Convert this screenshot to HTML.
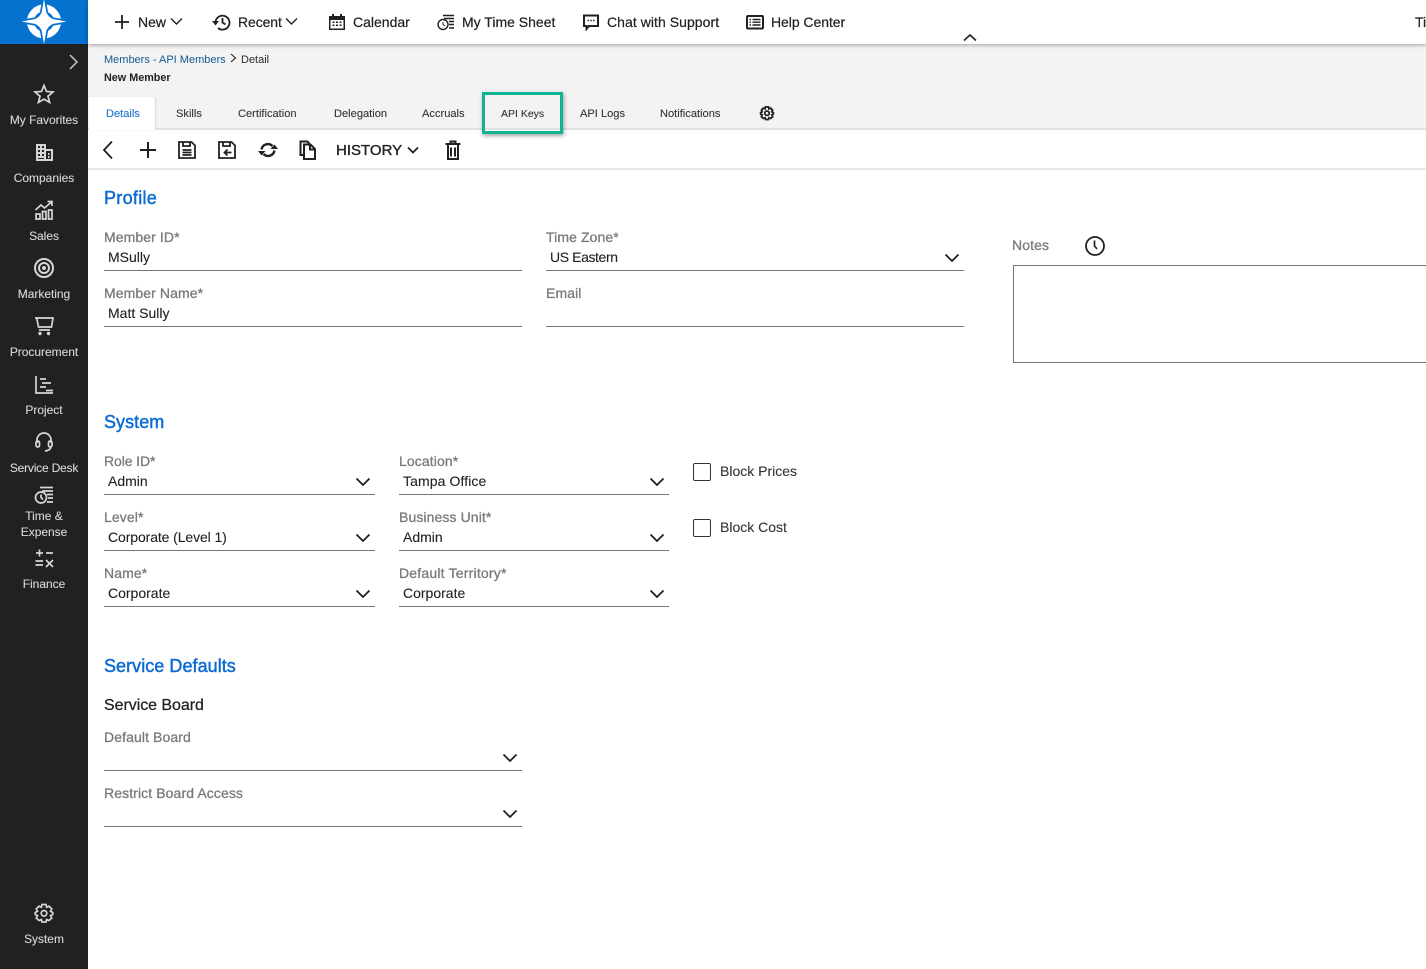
<!DOCTYPE html>
<html lang="en">
<head>
<meta charset="utf-8">
<title>New Member</title>
<style>
html,body{margin:0;padding:0;width:1426px;height:969px;overflow:hidden;background:#fff}
body{position:relative;font-family:"Liberation Sans",sans-serif;color:#212121}
.a,.t,.s,.l,.v,.h,.u,svg{position:absolute}
.t{white-space:nowrap;line-height:16px;font-size:14px;-webkit-text-stroke:.2px}
.s{left:0;width:88px;text-align:center;color:#d8d8d8;font-size:12px;line-height:16px;letter-spacing:-.03px;-webkit-text-stroke:.1px}
.l{white-space:nowrap;line-height:16px;font-size:14px;color:#7a7a7a;letter-spacing:.1px;-webkit-text-stroke:.3px}
.v{white-space:nowrap;line-height:16px;font-size:14px;color:#212121;-webkit-text-stroke:.1px}
.h{white-space:nowrap;line-height:22px;font-size:18px;color:#0b6bd3;letter-spacing:.05px;-webkit-text-stroke:.45px}
.u{height:1px;background:#757575}
.tab{white-space:nowrap;line-height:14px;font-size:11.100px;color:#333;position:absolute;top:107px;-webkit-text-stroke:.1px}
.ic{fill:none;stroke:#d6d6d6;stroke-width:1.7}
.k{fill:none;stroke:#212121;stroke-width:1.8}
</style>
</head>
<body>
<!-- sidebar -->
<div class="a" style="left:0;top:0;width:88px;height:969px;background:#212121"></div>
<div class="a" style="left:0;top:0;width:88px;height:44px;background:#0672cf"></div>
<svg style="left:22px;top:0" width="44" height="44" viewBox="0 0 44 44">
<circle cx="22" cy="21.500" r="13.500" fill="none" stroke="#fff" stroke-width="7"/>
<path d="M22 0L24.500 13L27 16.500L30.500 19L44 21.500L30.500 24L27 26.500L24.500 30L22 44L19.500 30L17 26.500L13.500 24L0 21.500L13.500 19L17 16.500L19.500 13Z" fill="#fff" stroke="#0672cf" stroke-width="3.500" stroke-linejoin="round"/>
<path d="M22 -1L24.500 13L27 16.500L30.500 19L45 21.500L30.500 24L27 26.500L24.500 30L22 44L19.500 30L17 26.500L13.500 24L-1 21.500L13.500 19L17 16.500L19.500 13Z" fill="#fff"/>
</svg>
<svg style="left:68px;top:54px" width="12" height="16"><path d="M2 1L9 8L2 15" fill="none" stroke="#c8c8c8" stroke-width="1.500"/></svg>

<svg style="left:33px;top:83px" width="22" height="22" viewBox="0 0 22 22"><path class="ic" d="M11 2.500L13.500 8.500L20 9L15 13.200L16.600 19.500L11 16.100L5.400 19.500L7 13.200L2 9L8.500 8.500Z"/></svg>
<div class="s" style="top:112px">My Favorites</div>
<svg style="left:33px;top:141px" width="22" height="22" viewBox="0 0 22 22"><path fill="#d6d6d6" fill-rule="evenodd" d="M3 3H13V8H20V20H3ZM5 5V7H7V5ZM9 5V7H11V5ZM5 9V11H7V9ZM9 9V11H11V9ZM5 13V15H7V13ZM9 13V15H11V13ZM5 17V18H11V17ZM13 10V18H18V10ZM15 12H16.500V14H15ZM15 15H16.500V17H15Z"/></svg>
<div class="s" style="top:170px">Companies</div>
<svg style="left:33px;top:199px" width="22" height="22" viewBox="0 0 22 22"><path class="ic" stroke-width="1.500" d="M2.500 11L8 6L11.500 9L18.500 3M14.500 2.500H19V7M3 15H7V20H3ZM9.500 12.500H13V20H9.500ZM15.500 11H19V20H15.500Z"/></svg>
<div class="s" style="top:228px">Sales</div>
<svg style="left:33px;top:257px" width="22" height="22" viewBox="0 0 22 22"><circle class="ic" style="stroke-width:2" cx="11" cy="11" r="9"/><circle class="ic" style="stroke-width:2" cx="11" cy="11" r="5"/><circle cx="11" cy="11" r="2" fill="#d6d6d6"/></svg>
<div class="s" style="top:286px">Marketing</div>
<svg style="left:33px;top:315px" width="22" height="22" viewBox="0 0 22 22"><path class="ic" d="M2 3H20L18.500 12H5.500L3.700 3M6 15H17"/><circle cx="7" cy="18.500" r="1.700" fill="#d6d6d6"/><circle cx="15.500" cy="18.500" r="1.700" fill="#d6d6d6"/></svg>
<div class="s" style="top:344px">Procurement</div>
<svg style="left:33px;top:373px" width="22" height="22" viewBox="0 0 22 22"><path class="ic" d="M3 3V20H20M7 6H13M9 10H18M7 14H13M13 17.500H20"/></svg>
<div class="s" style="top:402px">Project</div>
<svg style="left:33px;top:431px" width="22" height="22" viewBox="0 0 22 22"><path class="ic" d="M4 12V9A7 7 0 0 1 18 9V12M18 15C18 18 16 19.500 12 20"/><rect class="ic" x="3" y="10" width="3.500" height="6" rx="1.700"/><rect class="ic" x="15.500" y="10" width="3.500" height="6" rx="1.700"/></svg>
<div class="s" style="top:460px;letter-spacing:-.2px">Service Desk</div>
<svg style="left:33px;top:485px" width="22" height="20" viewBox="0 0 22 20"><path class="ic" d="M7 2.500H20M9 6H20M14 9.500H20M15 13H20M14 17H20"/><circle class="ic" cx="8" cy="12.500" r="5.500"/><path class="ic" stroke-width="1.200" d="M8 9.500V12.500L10 14.500"/></svg>
<div class="s" style="top:508px">Time &amp;<br>Expense</div>
<svg style="left:33px;top:547px" width="22" height="22" viewBox="0 0 22 22"><path class="ic" stroke-width="1.900" d="M3 6H10M6.500 2.500V9.500M13 6H20M2.500 14H10M2.500 18H10M13 13L20 20M20 13L13 20"/></svg>
<div class="s" style="top:576px">Finance</div>
<svg style="left:33px;top:902px" width="22" height="22" viewBox="0 0 22 22"><path class="ic" d="M9 2.500H13L13.600 5.300L16 4.200L18.800 7L17.500 9.300L19.800 10.500V12.500L17.500 13.500L18.800 16L16 18.500L13.600 17.500L13 20H9L8.400 17.500L6 18.500L3.200 16L4.500 13.500L2.200 12.500V10.500L4.500 9.300L3.200 7L6 4.200L8.400 5.300Z"/><circle class="ic" cx="11" cy="11.300" r="2.800"/></svg>
<div class="s" style="top:931px">System</div>

<!-- gray band + top bar -->
<div class="a" style="left:88px;top:44px;width:1338px;height:84px;background:#f3f3f3"></div>
<div class="a" style="left:88px;top:0;width:1338px;height:44px;background:#fff;box-shadow:0 1px 4px rgba(0,0,0,.35)"></div>

<svg style="left:114px;top:14px" width="16" height="16"><path class="k" d="M8 1V15M1 8H15"/></svg>
<div class="t" style="left:138px;top:14px">New</div>
<svg style="left:170px;top:17px" width="13" height="9"><path d="M1 1.500L6.500 7L12 1.500" fill="none" stroke="#212121" stroke-width="1.400"/></svg>
<svg style="left:212px;top:13px" width="20" height="18" viewBox="0 0 20 18"><path class="k" d="M3.500 9.500A7 7 0 1 1 6 15M10.500 5V9.500L13.500 11.500"/><path d="M0 8H7L3.500 12.500Z" fill="#212121"/></svg>
<div class="t" style="left:238px;top:14px;letter-spacing:-.1px">Recent</div>
<svg style="left:285px;top:17px" width="13" height="9"><path d="M1 1.500L6.500 7L12 1.500" fill="none" stroke="#212121" stroke-width="1.400"/></svg>
<svg style="left:329px;top:13px" width="16" height="18" viewBox="0 0 16 18"><path fill="#212121" fill-rule="evenodd" d="M3 1H5V3H11V1H13V3H16V17H0V3H3ZM1.500 7V15.500H14.500V7ZM3.500 8.500H5.500V10H3.500ZM7 8.500H9V10H7ZM10.500 8.500H12.500V10H10.500ZM3.500 11.500H5.500V13H3.500ZM7 11.500H9V13H7ZM10.500 11.500H12.500V13H10.500Z"/></svg>
<div class="t" style="left:353px;top:14px">Calendar</div>
<svg style="left:437px;top:14px" width="18" height="17" viewBox="0 0 18 17"><path d="M6 1.500H17M7 4.500H17M12 7.500H17M12 10.500H17M12 14H17" stroke="#212121" stroke-width="1.500" fill="none"/><circle cx="6" cy="10.500" r="5" fill="#fff" stroke="#212121" stroke-width="1.400"/><path d="M6 8V10.500L8 12" stroke="#212121" fill="none"/></svg>
<div class="t" style="left:462px;top:14px">My Time Sheet</div>
<svg style="left:583px;top:14px" width="16" height="17" viewBox="0 0 16 17"><path class="k" style="stroke-width:2" d="M1 1.500H15V12H6L3.500 15V12H1Z"/><path d="M4.500 6.500H6M7.300 6.500H8.800M10 6.500H11.500" stroke="#212121" stroke-width="1.600"/></svg>
<div class="t" style="left:607px;top:14px;letter-spacing:.05px">Chat with Support</div>
<svg style="left:746px;top:15px" width="18" height="15" viewBox="0 0 18 15"><rect class="k" style="stroke-width:2" x="1" y="1" width="16" height="12.500" rx="1"/><path d="M3.500 4.500H5M6.500 4.500H14.500M3.500 7.200H5M6.500 7.200H14.500M3.500 10H5M6.500 10H14.500" stroke="#212121" stroke-width="1.400"/></svg>
<div class="t" style="left:771px;top:14px;letter-spacing:-.05px">Help Center</div>
<svg style="left:963px;top:33px" width="14" height="9"><path d="M1 7.500L7 2L13 7.500" fill="none" stroke="#212121" stroke-width="1.600"/></svg>
<div class="t" style="left:1415px;top:14px">Ti</div>

<!-- breadcrumbs -->
<div class="t" style="left:104px;top:52px;font-size:11px;color:#1f5f93;-webkit-text-stroke:.05px">Members - API Members</div>
<svg style="left:230px;top:53px" width="7" height="10"><path d="M1 1L5.500 5L1 9" fill="none" stroke="#212121" stroke-width="1.100"/></svg>
<div class="t" style="left:241px;top:52px;font-size:11px;color:#333;-webkit-text-stroke:.05px">Detail</div>
<div class="t" style="left:104px;top:70px;font-size:10.800px;font-weight:bold;color:#212121;-webkit-text-stroke:0">New Member</div>

<!-- tabs -->
<div class="a" style="left:88px;top:128px;width:1338px;height:2px;background:#e2e2e2"></div>
<div class="a" style="left:89px;top:97px;width:66px;height:33px;background:#fff;border-radius:2px 2px 0 0;box-shadow:1px 0 1px #d8d8d8"></div>
<div class="tab" style="left:106px;color:#1a6fd0">Details</div>
<div class="tab" style="left:176px">Skills</div>
<div class="tab" style="left:238px">Certification</div>
<div class="tab" style="left:334px">Delegation</div>
<div class="tab" style="left:422px">Accruals</div>
<div class="tab" style="left:501px;font-size:10.500px">API Keys</div>
<div class="tab" style="left:580px">API Logs</div>
<div class="tab" style="left:660px">Notifications</div>
<svg style="left:759px;top:105px" width="16" height="16" viewBox="0 0 22 22"><path fill="none" stroke="#212121" stroke-width="2.400" d="M9 2.500H13L13.600 5.300L16 4.200L18.800 7L17.500 9.300L19.800 10.500V12.500L17.500 13.500L18.800 16L16 18.500L13.600 17.500L13 20H9L8.400 17.500L6 18.500L3.200 16L4.500 13.500L2.200 12.500V10.500L4.500 9.300L3.200 7L6 4.200L8.400 5.300Z"/><circle fill="none" stroke="#212121" stroke-width="2.400" cx="11" cy="11.300" r="3"/></svg>
<div class="a" style="left:482px;top:92px;width:75px;height:36px;border:3px solid #0fb493;box-shadow:1px 2px 4px rgba(0,0,0,.35)"></div>

<!-- toolbar -->
<div class="a" style="left:88px;top:168px;width:1338px;height:2px;background:#e8e8e8"></div>
<svg style="left:101px;top:140px" width="14" height="20"><path d="M11 1.500L3 10L11 18.500" fill="none" stroke="#212121" stroke-width="1.800"/></svg>
<svg style="left:139px;top:141px" width="18" height="18"><path d="M9 1V17M1 9H17" fill="none" stroke="#212121" stroke-width="2"/></svg>
<svg style="left:178px;top:141px" width="18" height="18" viewBox="0 0 18 18"><path class="k" d="M1 1H13.500L17 4.500V17H1ZM5 1V5H12V1M4.500 9H13.500M4.500 11.500H13.500M4.500 14H13.500"/></svg>
<svg style="left:218px;top:141px" width="18" height="18" viewBox="0 0 18 18"><path class="k" d="M1 1H13.500L17 4.500V17H1ZM5 1V5H12V1M13.500 11.500H6.500M9.500 8.500L6.500 11.500L9.500 14.500"/></svg>
<svg style="left:258px;top:141px" width="20" height="18" viewBox="0 0 20 18"><path class="k" style="stroke-width:2.400" d="M3.500 8.500A6.500 6.500 0 0 1 14.500 5M16.500 9.500A6.500 6.500 0 0 1 5.500 13"/><path d="M12.500 8H20L16.500 3.500ZM7.500 10H0L3.500 14.500Z" fill="#212121"/></svg>
<svg style="left:299px;top:140px" width="18" height="20" viewBox="0 0 18 20"><path class="k" style="stroke-width:2" d="M5 15H1.500V1.500H8.500L10.500 4M5 4.500H11.500L16 9V19H5ZM11 5V9.500H16"/></svg>
<div class="t" style="left:336px;top:143px;font-size:15px;color:#212121;-webkit-text-stroke:.35px">HISTORY</div>
<svg style="left:407px;top:146px" width="12" height="9"><path d="M1 1.500L6 6.500L11 1.500" fill="none" stroke="#212121" stroke-width="1.800"/></svg>
<svg style="left:445px;top:140px" width="16" height="20" viewBox="0 0 16 20"><path class="k" style="stroke-width:2" d="M3 5V19H13V5M0.500 4H15.500M5.500 3.500V1.500H10.500V3.500M6 7.500V16.500M10 7.500V16.500"/></svg>

<!-- profile -->
<div class="h" style="left:104px;top:187px;letter-spacing:.3px">Profile</div>
<div class="l" style="left:104px;top:229px">Member ID*</div>
<div class="v" style="left:108px;top:249px">MSully</div>
<div class="u" style="left:104px;top:270px;width:418px"></div>
<div class="l" style="left:104px;top:285px">Member Name*</div>
<div class="v" style="left:108px;top:305px">Matt Sully</div>
<div class="u" style="left:104px;top:326px;width:418px"></div>
<div class="l" style="left:546px;top:229px">Time Zone*</div>
<div class="v" style="left:550px;top:249px;letter-spacing:-.4px">US Eastern</div>
<div class="u" style="left:546px;top:270px;width:418px"></div>
<svg style="left:944px;top:253px" width="16" height="10"><path d="M1.500 1.500L8 8L14.500 1.500" fill="none" stroke="#212121" stroke-width="1.800"/></svg>
<div class="l" style="left:546px;top:285px">Email</div>
<div class="u" style="left:546px;top:326px;width:418px"></div>
<div class="l" style="left:1012px;top:237px">Notes</div>
<svg style="left:1085px;top:236px" width="20" height="20" viewBox="0 0 20 20"><circle cx="10" cy="10" r="9" fill="none" stroke="#212121" stroke-width="1.800"/><path d="M9.500 4.500V10L12 13" fill="none" stroke="#212121" stroke-width="1.700"/></svg>
<div class="a" style="left:1013px;top:265px;width:420px;height:96px;border:1px solid #757575"></div>

<!-- system -->
<div class="h" style="left:104px;top:411px">System</div>
<div class="l" style="left:104px;top:453px;letter-spacing:-.1px">Role ID*</div>
<div class="v" style="left:108px;top:473px">Admin</div>
<div class="u" style="left:104px;top:494px;width:271px"></div>
<svg style="left:355px;top:477px" width="16" height="10"><path d="M1.500 1.500L8 8L14.500 1.500" fill="none" stroke="#212121" stroke-width="1.800"/></svg>
<div class="l" style="left:104px;top:509px">Level*</div>
<div class="v" style="left:108px;top:529px;letter-spacing:-.1px">Corporate (Level 1)</div>
<div class="u" style="left:104px;top:550px;width:271px"></div>
<svg style="left:355px;top:533px" width="16" height="10"><path d="M1.500 1.500L8 8L14.500 1.500" fill="none" stroke="#212121" stroke-width="1.800"/></svg>
<div class="l" style="left:104px;top:565px">Name*</div>
<div class="v" style="left:108px;top:585px">Corporate</div>
<div class="u" style="left:104px;top:606px;width:271px"></div>
<svg style="left:355px;top:589px" width="16" height="10"><path d="M1.500 1.500L8 8L14.500 1.500" fill="none" stroke="#212121" stroke-width="1.800"/></svg>

<div class="l" style="left:399px;top:453px">Location*</div>
<div class="v" style="left:403px;top:473px;letter-spacing:.1px">Tampa Office</div>
<div class="u" style="left:399px;top:494px;width:270px"></div>
<svg style="left:649px;top:477px" width="16" height="10"><path d="M1.500 1.500L8 8L14.500 1.500" fill="none" stroke="#212121" stroke-width="1.800"/></svg>
<div class="l" style="left:399px;top:509px">Business Unit*</div>
<div class="v" style="left:403px;top:529px">Admin</div>
<div class="u" style="left:399px;top:550px;width:270px"></div>
<svg style="left:649px;top:533px" width="16" height="10"><path d="M1.500 1.500L8 8L14.500 1.500" fill="none" stroke="#212121" stroke-width="1.800"/></svg>
<div class="l" style="left:399px;top:565px;letter-spacing:.2px">Default Territory*</div>
<div class="v" style="left:403px;top:585px">Corporate</div>
<div class="u" style="left:399px;top:606px;width:270px"></div>
<svg style="left:649px;top:589px" width="16" height="10"><path d="M1.500 1.500L8 8L14.500 1.500" fill="none" stroke="#212121" stroke-width="1.800"/></svg>

<div class="a" style="left:693px;top:463px;width:16px;height:16px;border:1px solid #333;border-radius:2px"></div>
<div class="v" style="left:720px;top:463px;color:#333">Block Prices</div>
<div class="a" style="left:693px;top:519px;width:16px;height:16px;border:1px solid #333;border-radius:2px"></div>
<div class="v" style="left:720px;top:519px;color:#333">Block Cost</div>

<!-- service defaults -->
<div class="h" style="left:104px;top:655px">Service Defaults</div>
<div class="t" style="left:104px;top:698px;font-size:16px;color:#212121;-webkit-text-stroke:.25px;letter-spacing:-.05px">Service Board</div>
<div class="l" style="left:104px;top:729px">Default Board</div>
<div class="u" style="left:104px;top:770px;width:418px"></div>
<svg style="left:502px;top:753px" width="16" height="10"><path d="M1.500 1.500L8 8L14.500 1.500" fill="none" stroke="#212121" stroke-width="1.800"/></svg>
<div class="l" style="left:104px;top:785px">Restrict Board Access</div>
<div class="u" style="left:104px;top:826px;width:418px"></div>
<svg style="left:502px;top:809px" width="16" height="10"><path d="M1.500 1.500L8 8L14.500 1.500" fill="none" stroke="#212121" stroke-width="1.800"/></svg>
</body>
</html>
